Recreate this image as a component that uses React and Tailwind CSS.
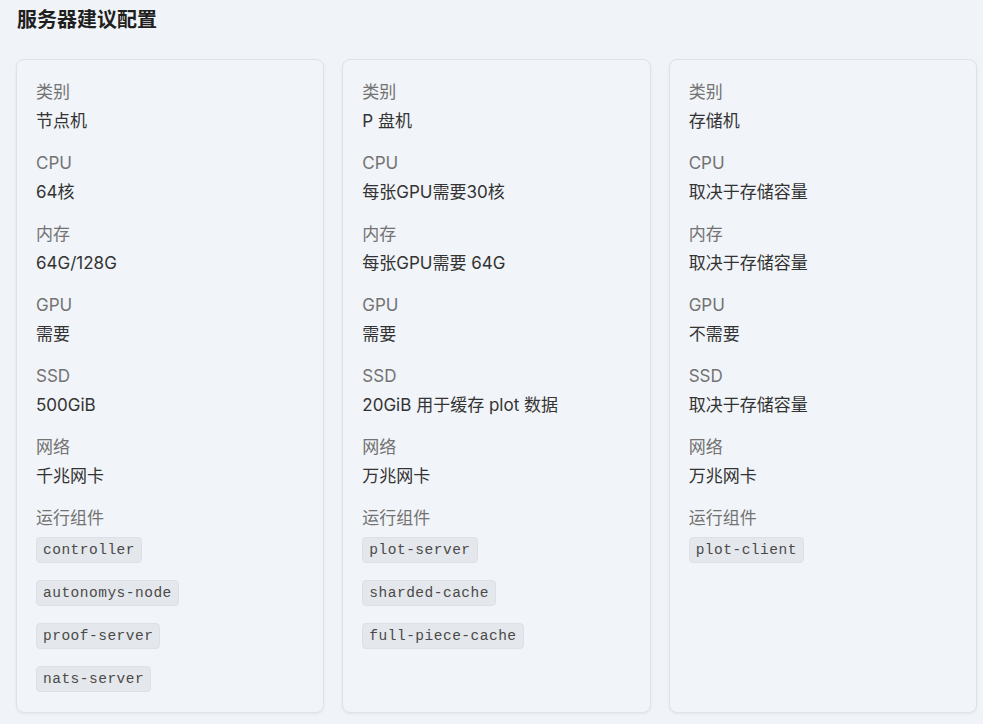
const servers = [
  {
    type: '节点机',
    cpu: '64核',
    mem: '64G/128G',
    gpu: '需要',
    ssd: '500GiB',
    net: '千兆网卡',
    components: ['controller', 'autonomys-node', 'proof-server', 'nats-server'],
  },
  {
    type: 'P 盘机',
    cpu: '每张GPU需要30核',
    mem: '每张GPU需要 64G',
    gpu: '需要',
    ssd: '20GiB 用于缓存 plot 数据',
    net: '万兆网卡',
    components: ['plot-server', 'sharded-cache', 'full-piece-cache'],
  },
  {
    type: '存储机',
    cpu: '取决于存储容量',
    mem: '取决于存储容量',
    gpu: '不需要',
    ssd: '取决于存储容量',
    net: '万兆网卡',
    components: ['plot-client'],
  },
];

const Field = ({ label, value }) => (
  <div className="mb-[13px]">
    <div className="text-[#737373] leading-[29px]">{label}</div>
    <div className="text-[#333333] leading-[29px]">{value}</div>
  </div>
);

const ServerCard = ({ s }) => (
  <div className="flex-1 bg-[#f1f4f8] border border-[#dfe3e8] rounded-lg shadow-[0_1px_3px_rgba(0,0,0,0.06)] px-[19px] pt-[18px] pb-[20px]">
    <Field label="类别" value={s.type} />
    <Field label="CPU" value={s.cpu} />
    <Field label="内存" value={s.mem} />
    <Field label="GPU" value={s.gpu} />
    <Field label="SSD" value={s.ssd} />
    <Field label="网络" value={s.net} />
    <div className="text-[#737373] leading-[29px]">运行组件</div>
    <div className="flex flex-col items-start gap-[17px] mt-[4px]">
      {s.components.map((c) => (
        <code
          key={c}
          className="bg-[#e4e7eb] border border-[#dde1e5] rounded px-[6px] h-[26px] leading-[24px] text-[14.5px] text-[#4a4a4a] tracking-[0.5px]"
          style={{ fontFamily: '"Liberation Mono", "DejaVu Sans Mono", monospace' }}
        >
          {c}
        </code>
      ))}
    </div>
  </div>
);

export default function App() {
  return (
    <div
      className="min-h-[724px] bg-[#f0f3f7] pl-4 pr-[6px] pt-[7px] text-[17px]"
      style={{ fontFamily: 'Inter, "Noto Sans CJK SC", sans-serif' }}
    >
      <h2 className="text-[20px] font-bold text-[#1f1f1f] leading-[26px] mb-[26px] pl-[1px]">服务器建议配置</h2>
      <div className="flex items-stretch gap-[18px]">
        {servers.map((s) => (
          <ServerCard key={s.type} s={s} />
        ))}
      </div>
    </div>
  );
}
